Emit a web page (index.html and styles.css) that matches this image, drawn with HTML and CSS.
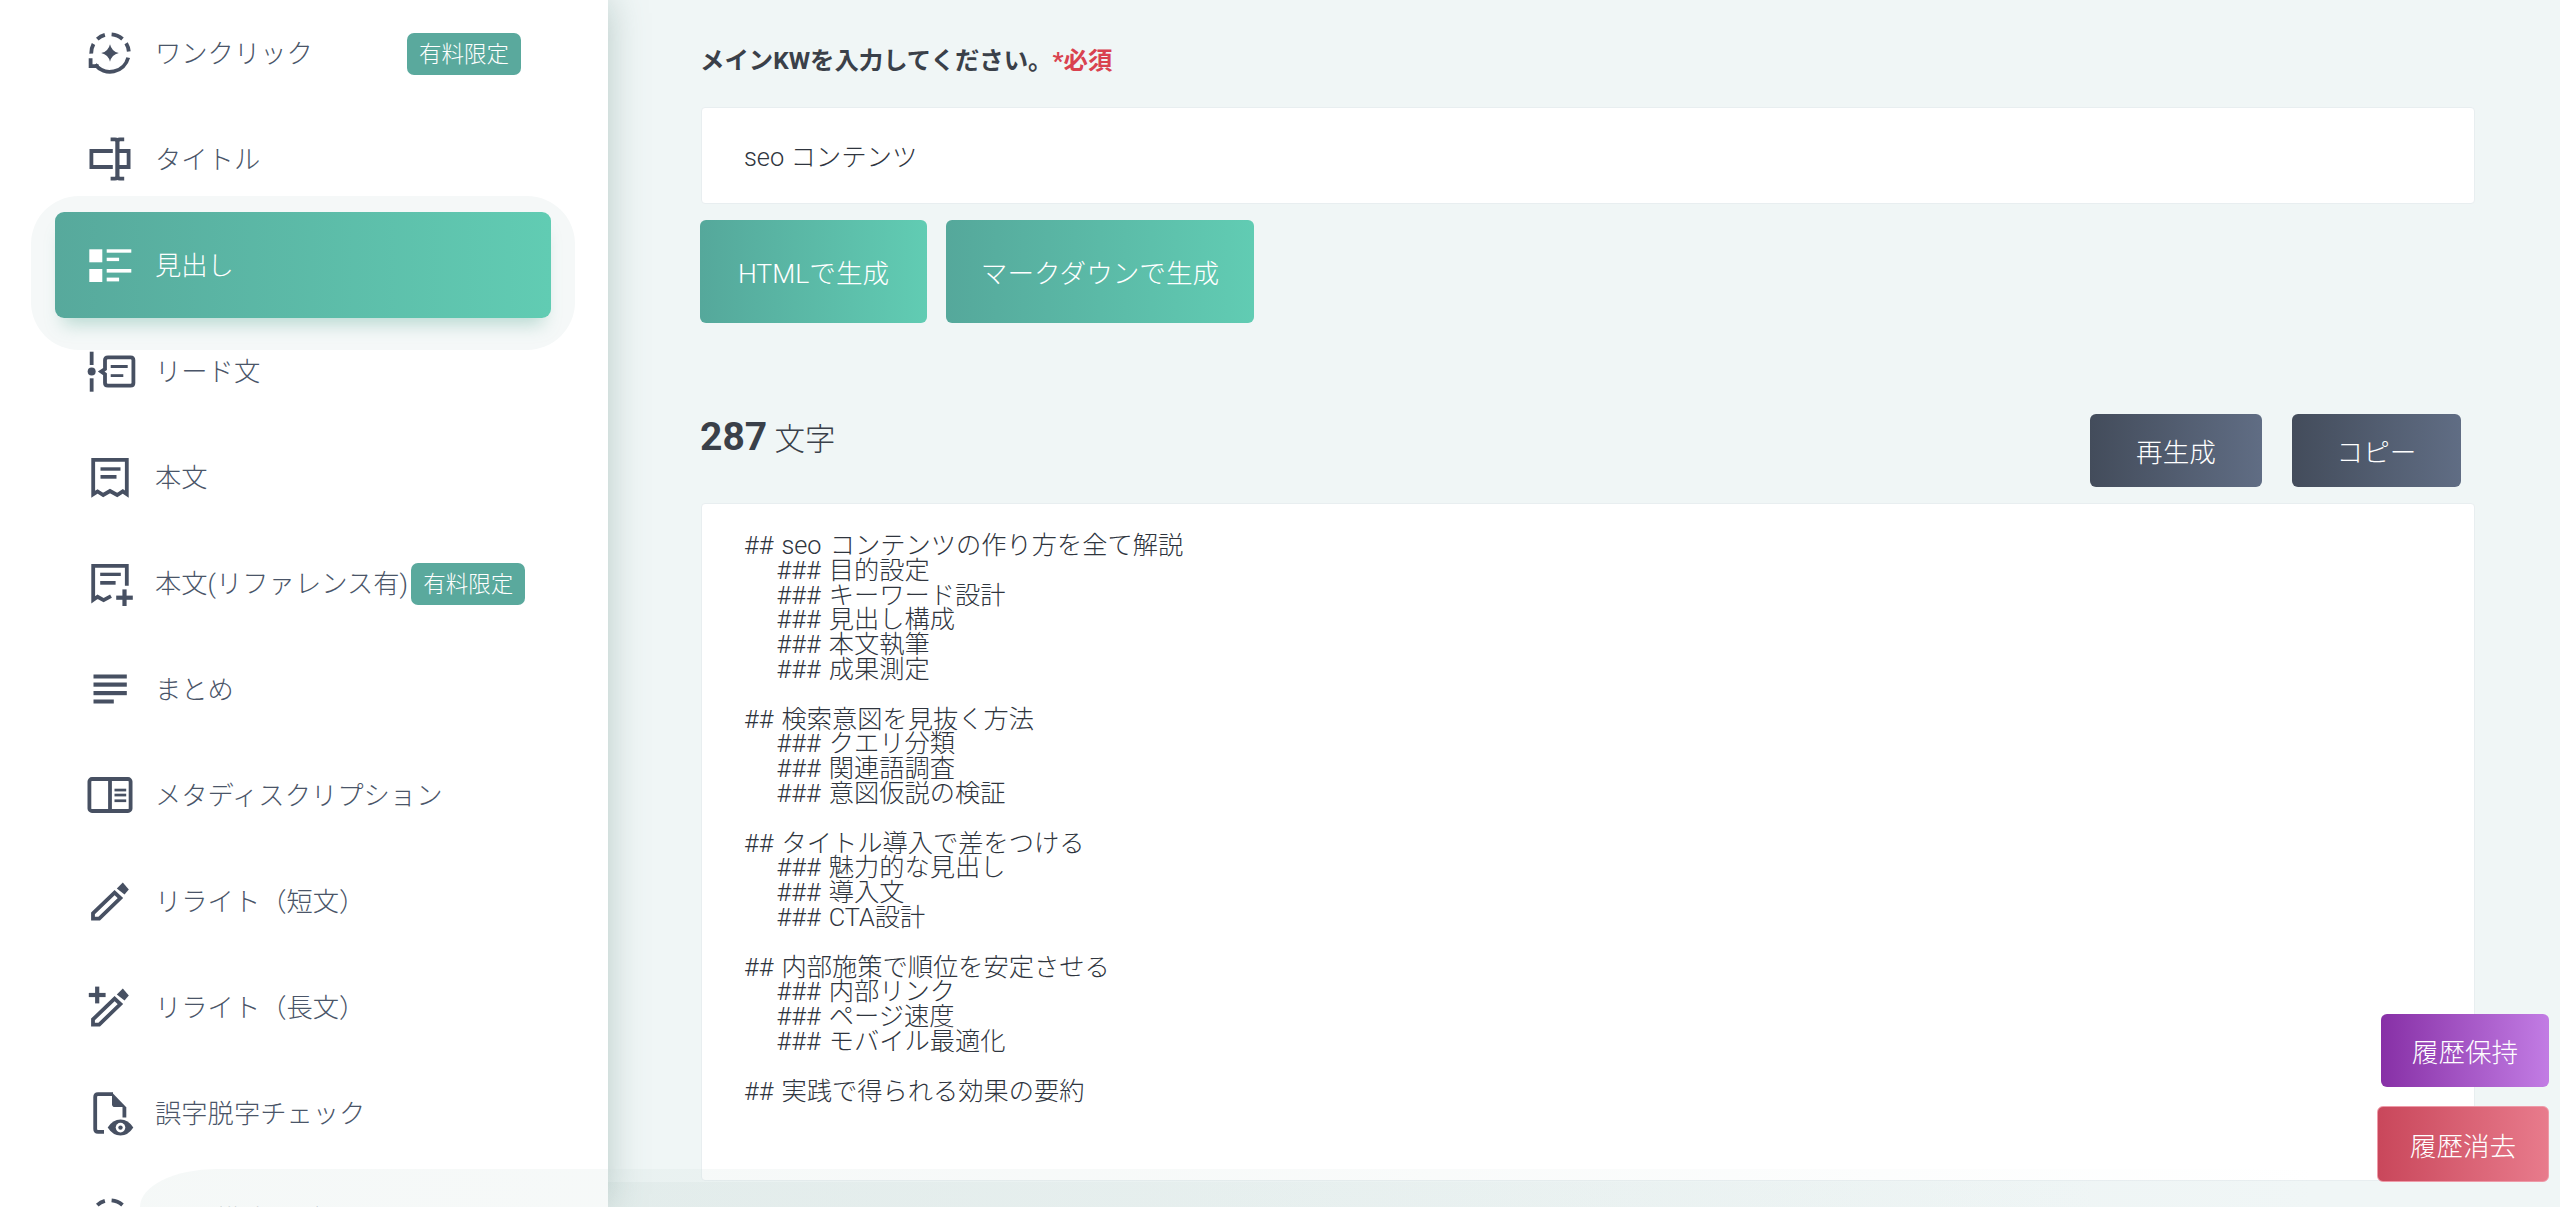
FILE: index.html
```html
<!DOCTYPE html>
<html lang="ja">
<head>
<meta charset="utf-8">
<title>見出し生成</title>
<link rel="stylesheet" href="styles.css">
</head>
<body>
<div class="app">
  <aside class="sidebar">
    <nav class="menu">
      <a class="item">
        <svg class="icon" viewBox="0 0 24 24"><g class="st"><path d="M2.6 12.3A9.4 9.4 0 0 1 3.75 7.5"/><path d="M5.64 5.08A9.4 9.4 0 0 1 9.44 2.96"/><path d="M12.8 2.64A9.4 9.4 0 0 1 18.24 4.98"/><path d="M20.06 7.16A9.4 9.4 0 0 1 21.4 11.25"/><path d="M21.1 14.3A9.4 9.4 0 0 1 4.57 17.75"/><path d="M2.3 14.6V18.6H6.3"/></g><path class="fl" d="M12 7.6Q12.8 11.2 16.4 12Q12.8 12.8 12 16.4Q11.2 12.8 7.6 12Q11.2 11.2 12 7.6Z"/></svg>
        <span class="label">ワンクリック</span>
        <span class="badge badge-far">有料限定</span>
      </a>
      <a class="item">
        <svg class="icon" viewBox="0 0 24 24"><g class="st"><path d="M13.4 8H2.7V16H13.4"/><path d="M15.7 8H21.3V16H15.7"/><path class="st-b" d="M15.7 3V21"/><path d="M12.3 2.2H14.5Q15.7 2.2 15.7 3.4Q15.7 2.2 16.9 2.2H19.1"/><path d="M12.3 21.8H14.5Q15.7 21.8 15.7 20.6Q15.7 21.8 16.9 21.8H19.1"/></g></svg>
        <span class="label">タイトル</span>
      </a>
      <a class="item active">
        <svg class="icon" viewBox="0 0 24 24"><g class="fl"><rect x="1.65" y="4.15" width="6.5" height="6.5"/><rect x="1.65" y="14" width="6.5" height="6.5"/><rect x="10.35" y="4.15" width="12.3" height="1.7"/><rect x="10.35" y="8.35" width="6.2" height="1.7"/><rect x="10.35" y="14" width="12.3" height="1.8"/><rect x="10.35" y="18.3" width="6.2" height="1.9"/></g></svg>
        <span class="label">見出し</span>
      </a>
      <a class="item">
        <svg class="icon" viewBox="0 0 24 24"><g class="st"><path d="M2.83 2.35V9"/><path d="M2.83 15.65V22.35"/><path d="M11 5.15H22.3Q23.7 5.15 23.7 6.55V18Q23.7 19.35 22.3 19.35H11Q9.5 19.35 9.5 18V13.6L7.6 12.3L9.5 11V6.55Q9.5 5.15 11 5.15Z"/></g><g class="fl"><circle cx="2.83" cy="12.3" r="2"/><rect x="12.35" y="9" width="8.5" height="1.5"/><rect x="12.35" y="13.6" width="6.3" height="1.4"/></g></svg>
        <span class="label">リード文</span>
      </a>
      <a class="item">
        <svg class="icon" viewBox="0 0 24 24"><path class="st" d="M3.6 20.6V3.4H20.4V20.6L18.4 19.2L15.6 21L12 19L8.6 21L5.8 19.2Z"/><g class="fl"><rect x="7.25" y="7.15" width="10" height="1.7"/><rect x="7.25" y="11" width="8" height="1.85"/></g></svg>
        <span class="label">本文</span>
      </a>
      <a class="item">
        <svg class="icon" viewBox="0 0 24 24"><g class="st"><path d="M20.4 13.4V3.4H3.6V20.4L5.8 18.9L8.8 20.6L12.5 18.6"/><path class="st-b" d="M19.25 15.2V23.5"/><path class="st-b" d="M15.1 19.35H23.4"/></g><g class="fl"><rect x="7.1" y="6.85" width="10.3" height="1.65"/><rect x="7.1" y="11" width="7.7" height="1.85"/></g></svg>
        <span class="label">本文(リファレンス有)</span>
        <span class="badge">有料限定</span>
      </a>
      <a class="item">
        <svg class="icon" viewBox="0 0 24 24"><g class="fl"><rect x="3.75" y="4.75" width="16.65" height="2"/><rect x="3.75" y="8.75" width="16.65" height="2.1"/><rect x="3.75" y="13" width="16.65" height="2.1"/><rect x="3.75" y="17.25" width="10.15" height="2"/></g></svg>
        <span class="label">まとめ</span>
      </a>
      <a class="item">
        <svg class="icon" viewBox="0 0 24 24"><g class="st"><rect x="1.7" y="4" width="20.6" height="16" rx="1.3"/><path d="M12 4V20"/></g><g class="fl"><rect x="14.25" y="8.85" width="5.85" height="1.35"/><rect x="14.25" y="11.35" width="5.85" height="1.35"/><rect x="14.25" y="14.2" width="5.85" height="1.35"/></g></svg>
        <span class="label">メタディスクリプション</span>
      </a>
      <a class="item">
        <svg class="icon" viewBox="0 0 24 24"><path class="st" d="M3.5 20.8V18.2L14.3 7.8L17.2 10.5L6.6 20.8Z"/><path class="fl" d="M18.4 2.8L21.4 6.2L19.25 8.7L15.4 5.7Z"/></svg>
        <span class="label">リライト（短文）</span>
      </a>
      <a class="item">
        <svg class="icon" viewBox="0 0 24 24"><path class="st" d="M3.5 20.8V18.2L14.3 7.8L17.2 10.5L6.6 20.8Z"/><path class="fl" d="M18.4 2.8L21.4 6.2L19.25 8.7L15.4 5.7Z"/><g class="st"><path class="st-b" d="M5.6 1.8V10.2"/><path class="st-b" d="M1.4 6H9.8"/></g></svg>
        <span class="label">リライト（長文）</span>
      </a>
      <a class="item">
        <svg class="icon" viewBox="0 0 24 24"><path class="st" d="M13.5 2.6H6Q4.6 2.6 4.6 4V20Q4.6 21.4 6 21.4H9M19.2 9V14.2"/><path class="fl" d="M13 1.8L20 9H14.4Q13 9 13 7.6Z"/><path class="fl" d="M10.85 19.3Q13.4 15.3 17.25 15.3Q21.1 15.3 23.65 19.3Q21.1 23.3 17.25 23.3Q13.4 23.3 10.85 19.3Z"/><circle class="hole" cx="17.25" cy="19.3" r="2.4"/><circle class="fl" cx="17.25" cy="19.3" r="1.1"/></svg>
        <span class="label">誤字脱字チェック</span>
      </a>
      <a class="item">
        <svg class="icon" viewBox="0 0 24 24"><g class="st"><path d="M2.6 12.3A9.4 9.4 0 0 1 3.75 7.5"/><path d="M5.64 5.08A9.4 9.4 0 0 1 9.44 2.96"/><path d="M12.8 2.64A9.4 9.4 0 0 1 18.24 4.98"/><path d="M20.06 7.16A9.4 9.4 0 0 1 21.4 11.25"/></g></svg>
        <span class="label label-shift">構造化データ</span>
      </a>
    </nav>
  </aside>
  <main class="content">
    <p class="field-label">メインKWを入力してください。<span class="req">*必須</span></p>
    <div class="input">seo コンテンツ</div>
    <div class="gen-row">
      <button class="btn btn-green btn-gen">HTMLで生成</button>
      <button class="btn btn-green btn-gen">マークダウンで生成</button>
    </div>
    <div class="result-head">
      <h2 class="count"><b>287</b> 文字</h2>
      <div class="result-actions">
        <button class="btn btn-dark btn-regen">再生成</button>
        <button class="btn btn-dark btn-copy">コピー</button>
      </div>
    </div>
    <pre class="output">## seo コンテンツの作り方を全て解説
    ### 目的設定
    ### キーワード設計
    ### 見出し構成
    ### 本文執筆
    ### 成果測定

## 検索意図を見抜く方法
    ### クエリ分類
    ### 関連語調査
    ### 意図仮説の検証

## タイトル導入で差をつける
    ### 魅力的な見出し
    ### 導入文
    ### CTA設計

## 内部施策で順位を安定させる
    ### 内部リンク
    ### ページ速度
    ### モバイル最適化

## 実践で得られる効果の要約</pre>
  </main>
</div>
<div class="glow"></div>
<div class="floor"></div>
<button class="btn float float-keep">履歴保持</button>
<button class="btn float float-clear">履歴消去</button>
</body>
</html>
```
FILE: styles.css
```css
* { box-sizing: border-box; }
html, body { margin: 0; height: 100%; overflow: hidden; }
body {
  background: #f0f6f6;
  color: #3f4650;
  font-family: Roboto, "Noto Sans CJK JP", sans-serif;
  font-weight: 300;
}
.app { display: flex; height: 1207px; overflow: hidden; }
.sidebar {
  flex: 0 0 608px;
  background: #fff;
  box-shadow: 0 0 36px rgba(90, 130, 120, .38);
  position: relative;
  z-index: 2;
  overflow: hidden;
}
.menu { display: flex; flex-direction: column; }
.item {
  flex: 0 0 106px;
  height: 106px;
  margin: 0 57px 0 55px;
  padding-left: 31px;
  display: flex;
  align-items: center;
  color: #4a5568;
  font-size: 26.3px;
  border-radius: 9px;
  position: relative;
}
.item.active {
  background: linear-gradient(90deg, #57a99c, #61ccb3);
  color: #fff;
  box-shadow: 0 14px 18px -8px rgba(90, 170, 150, .4);
}
.item.active::before {
  content: "";
  position: absolute;
  inset: -16px -24px -32px;
  border-radius: 48px;
  background: #f5f8f8;
  z-index: -1;
}
.item.active .fl { fill: #fff; }
.icon { width: 48px; height: 48px; flex: none; overflow: visible; margin-right: 21px; }
.st, .st path, .st rect { fill: none; stroke: #475062; stroke-width: 1.9; }
.st-b { stroke-width: 2.1 !important; }
.fl { fill: #475062; }
.hole { fill: #fff; }
.label { white-space: nowrap; margin-top: -3px; }
.label-shift { margin-left: 60px; }
.badge {
  background: #5aa99d;
  color: #fff;
  font-size: 22.5px;
  line-height: 42px;
  height: 42px;
  padding: 0 12px;
  border-radius: 7px;
  white-space: nowrap;
  margin-left: 3px;
  margin-top: 1px;
}
.badge-far { margin-left: auto; margin-right: 30px; }
.content {
  flex: 1;
  padding: 45px 85px 0 92px;
  min-width: 0;
}
.field-label {
  margin: 0 0 30px;
  font-size: 24.4px;
  line-height: 32px;
  font-weight: 700;
  color: #3a4049;
}
.req { color: #d9424f; }
.input {
  height: 97px;
  background: #fff;
  border: 1px solid #e8eef0;
  border-radius: 4px;
  padding: 0 0 2px 42px;
  display: flex;
  align-items: center;
  font-size: 25.4px;
  color: #2f353e;
  margin-bottom: 16px;
  margin-left: 1px;
}
.btn {
  border: 0;
  color: #fff;
  font-family: inherit;
  font-weight: 300;
  font-size: 26.6px;
  border-radius: 6px;
  padding: 0;
}
.btn-green { background: linear-gradient(90deg, #55a89b, #61ccb3); }
.btn-dark { background: linear-gradient(90deg, #434c5b, #606d84); }
.gen-row { display: flex; gap: 19px; }
.btn-gen { height: 103px; }
.btn-gen:first-child { width: 227px; }
.btn-gen:last-child { width: 308px; }
.result-head {
  display: flex;
  justify-content: space-between;
  align-items: flex-start;
  margin-top: 91px;
  padding-right: 14px;
}
.count {
  margin: 0;
  font-size: 30.5px;
  font-weight: 300;
  line-height: 46px;
  color: #3a4049;
}
.count b { font-size: 39px; font-weight: 700; }
.result-actions { display: flex; gap: 30px; }
.btn-regen { width: 172px; height: 73px; }
.btn-copy { width: 169px; height: 73px; }
.output {
  margin: 16px 0 0 1px;
  height: 678px;
  background: #fff;
  border: 1px solid #e8eef0;
  border-radius: 4px;
  padding: 30px 42px;
  font-family: inherit;
  font-size: 25.25px;
  line-height: 24.8px;
  word-spacing: 2px;
  color: #2f353e;
  white-space: pre-wrap;
  overflow: hidden;
}
.glow {
  position: absolute;
  left: 140px;
  top: 1169px;
  width: 2300px;
  height: 38px;
  border-radius: 120px 0 0 0 / 60px 0 0 0;
  background: linear-gradient(90deg, rgba(200, 218, 214, .18), rgba(200, 218, 214, .14) 45%, rgba(200, 218, 214, 0) 95%);
  z-index: 3;
  pointer-events: none;
}
.floor {
  position: absolute;
  left: 608px;
  top: 1182px;
  width: 1500px;
  height: 25px;
  background: linear-gradient(90deg, rgba(190, 208, 204, .16), rgba(190, 208, 204, 0));
  z-index: 1;
  pointer-events: none;
}
.float { position: absolute; z-index: 4; }
.float-keep {
  left: 2381px;
  top: 1014px;
  width: 168px;
  height: 73px;
  background: linear-gradient(90deg, #8730a6, #c27ce4);
}
.float-clear {
  left: 2377px;
  top: 1106px;
  width: 172px;
  height: 76px;
  background: linear-gradient(90deg, #c9475b, #e87b8c);
  border: 1px solid #ee9aa8;
}
```
